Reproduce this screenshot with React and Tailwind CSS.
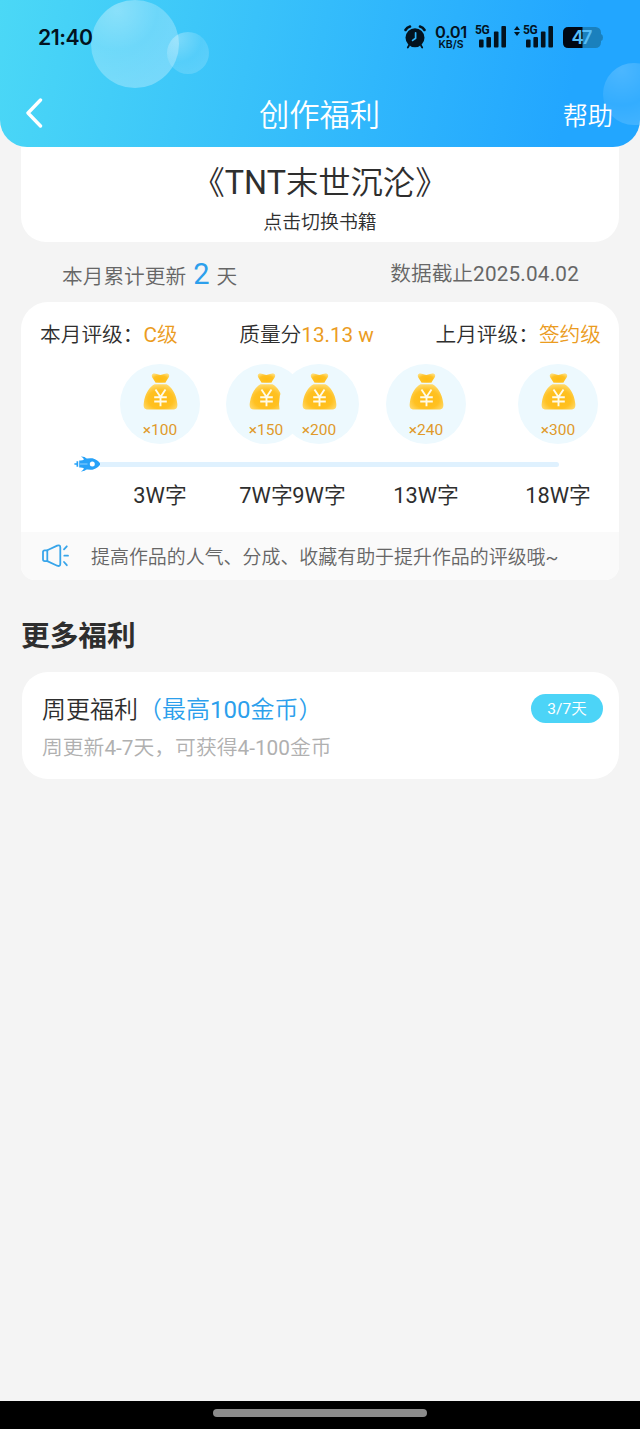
const milestones = [
  { words: '3W', coins: 100, offset: 'ml-[99px]' },
  { words: '7W', coins: 150, offset: 'ml-[26px]' },
  { words: '9W', coins: 200, offset: '-ml-[27px]' },
  { words: '13W', coins: 240, offset: 'ml-[27px]' },
  { words: '18W', coins: 300, offset: 'ml-[52px]' },
];

function AlarmIcon() {
  return (
    <svg className="h-[24px] w-[22px]" viewBox="0 0 22 24" fill="none">
      <path d="M1.5 5Q3 2.3 6 1.5" stroke="#03131f" strokeWidth="2.6" strokeLinecap="round" />
      <path d="M20.5 5Q19 2.3 16 1.5" stroke="#03131f" strokeWidth="2.6" strokeLinecap="round" />
      <path d="M5 20.5L3.8 22.5M17 20.5L18.2 22.5" stroke="#03131f" strokeWidth="1.8" strokeLinecap="round" />
      <circle cx="11" cy="12.7" r="9.5" fill="#03131f" />
      <path d="M11.6 7.8V13.2L8.6 15.4" stroke="#30b5fc" strokeWidth="1.7" strokeLinecap="round" strokeLinejoin="round" />
    </svg>
  );
}

function SignalIcon() {
  return (
    <svg className="h-[22px] w-[27px]" viewBox="0 0 27 22" fill="#03131f">
      <rect x="0" y="13.5" width="4.6" height="8" rx="1" />
      <rect x="7.4" y="11" width="4.6" height="10.5" rx="1" />
      <rect x="14.9" y="5.5" width="4.6" height="16" rx="1" />
      <rect x="22.4" y="0" width="4.6" height="21.5" rx="1" />
    </svg>
  );
}

function BatteryIcon() {
  return (
    <svg className="h-[21px] w-[40px]" viewBox="0 0 40 21">
      <rect x="0" y="0" width="38" height="21" rx="5.5" fill="#1a80bd" />
      <path d="M38 7Q40 7.5 40 10.5Q40 13.5 38 14Z" fill="#1a80bd" />
      <path d="M5.5 0H19.5V21H5.5Q0 21 0 15.5V5.5Q0 0 5.5 0Z" fill="#000814" />
      <text x="8.5" y="17.3" fontSize="18.5" fontWeight="600" fill="#55bdf8" fontFamily="Inter, sans-serif" textLength="21">47</text>
    </svg>
  );
}

function MoneyBag() {
  return (
    <svg className="h-[37px] w-[35px]" viewBox="0 0 35 37">
      <defs>
        <radialGradient id="bag" cx="50%" cy="60%" r="62%">
          <stop offset="0" stopColor="#ffbb12" />
          <stop offset="0.6" stopColor="#ffc122" />
          <stop offset="1" stopColor="#ffdb70" />
        </radialGradient>
      </defs>
      <path d="M12.5 9.8C11 6.5 8.5 4.5 8.8 2.3C9.2 .2 12 .1 13.8 1.1C15.8 2.2 18.8 2.2 20.9 1.1C23 0 25.9 .4 26.2 2.4C26.4 4.6 23.5 6.5 22.5 9.8Z" fill="url(#bag)" />
      <path d="M11.5 11.3H23.5C28 13.5 33 20 34.2 30C34.9 34.5 33.5 36.5 30 36.5H5C1.5 36.5 .1 34.5 .8 30C2 20 7 13.5 11.5 11.3Z" fill="url(#bag)" />
      <path d="M12.5 16.5L17.5 24L22.5 16.5M17.5 24V33.2M11.2 24.3H23.8M11.2 28.5H23.8" stroke="#fffbe8" strokeWidth="1.9" fill="none" />
    </svg>
  );
}

function Rocket() {
  return (
    <svg className="h-[16px] w-[27px] shrink-0" viewBox="0 0 27 16">
      <path d="M5.2 4.4Q8 4.8 10.5 3.3Q14 1.8 18.5 2.3Q24 3.8 26.5 8Q24 12.2 18.5 13.7Q14 14.2 10.5 12.7Q8 11.2 5.2 11.6Z" fill="#27a2f8" />
      <path d="M7 .6Q10.5 .4 13.2 3L10.5 4.6Q9.3 1.8 7 .6ZM7 15.4Q10.5 15.6 13.2 13L10.5 11.4Q9.3 14.2 7 15.4Z" fill="#27a2f8" />
      <path d="M4.2 5.2H2.5V7.2H.4V8.8H2.5V10.8H4.2Z" fill="#27a2f8" />
      <path d="M6 8H13.5" stroke="#8dd0ff" strokeWidth="1" />
      <circle cx="18.3" cy="8" r="2.5" fill="#fff" />
    </svg>
  );
}

function Speaker() {
  return (
    <svg className="h-[24px] w-[27px]" viewBox="0 0 27 24" fill="none" stroke="#38a5ea" strokeWidth="1.8" strokeLinecap="round" strokeLinejoin="round">
      <path d="M5.3 6.3H2.8Q1 6.3 1 8.1V15.3Q1 17.1 2.8 17.1H5.3Z" />
      <path d="M5.3 6.3L15.2 1.6Q18.3 .5 18.3 3.5V19.8Q18.3 22.8 15.2 21.7L5.3 17.1" />
      <path d="M22 5.4L24.8 2.3M22.3 11.7H26M22 18L24.8 21.2" />
    </svg>
  );
}

// Latin letters and digits sit one weight above the Chinese text
function Latin({ children }) {
  return <span className="font-normal">{children}</span>;
}

function StatusBar() {
  return (
    <div className="relative flex h-[74px] items-center pr-[37px] pl-[38px] text-[#03131f]">
      <span className="w-[56px] font-['Inter'] text-[21.2px] leading-[24px] font-semibold tracking-[-0.5px]">21:40</span>
      <div className="ml-auto flex items-center">
        <AlarmIcon />
        <div className="ml-[9px] flex w-[32px] flex-col items-center font-['Inter'] font-semibold">
          <span className="text-[16.5px] leading-[13px] tracking-[-0.3px]">0.01</span>
          <span className="mt-[1px] text-[10.5px] leading-[9px]">KB/S</span>
        </div>
        <div className="ml-[8px] flex h-[22px] items-start">
          <span className="-mr-[11px] w-[15px] font-['Roboto'] text-[12px] leading-[9px] font-bold tracking-[-0.3px]">5G</span>
          <SignalIcon />
        </div>
        <div className="ml-[8px] flex h-[22px] items-start">
          <svg className="mr-[3px] h-[10px] w-[6px]" viewBox="0 0 6 10" fill="#03131f">
            <path d="M3 0L6 4H0ZM3 10L0 6H6Z" />
          </svg>
          <span className="-mr-[12px] w-[15px] font-['Roboto'] text-[12px] leading-[9px] font-bold tracking-[-0.3px]">5G</span>
          <SignalIcon />
        </div>
        <div className="ml-[10px]">
          <BatteryIcon />
        </div>
      </div>
    </div>
  );
}

function Header() {
  return (
    <header className="relative z-10 h-[147px] overflow-hidden rounded-b-[27px] bg-[linear-gradient(102deg,#4bd8f6_0%,#22a6ff_88%)]">
      <div className="absolute top-0 left-[91px] size-[88px] rounded-full bg-[radial-gradient(circle_at_30%_12%,#ffffff60,#ffffff3c_40%,#ffffff50_100%)]" />
      <div className="absolute top-[32px] left-[167px] size-[42px] rounded-full bg-[radial-gradient(circle_at_25%_15%,#ffffff50,#ffffff20_50%,#ffffff30_100%)]" />
      <div className="absolute top-[63px] left-[603px] size-[62px] rounded-full bg-[radial-gradient(circle_at_30%_12%,#ffffff30,#ffffff14_50%,#ffffff30_100%)]" />
      <StatusBar />
      <div className="relative grid h-[78px] grid-cols-3 items-center pr-[27px] pl-[26px] text-white">
        <svg className="h-[30px] w-[17px]" viewBox="0 0 17 30" fill="none">
          <path d="M14.5 2L2 15L14.5 28" stroke="#fff" strokeWidth="3.4" strokeLinecap="round" strokeLinejoin="round" />
        </svg>
        <h1 className="mt-[5px] text-center text-[30.3px] leading-[40px]">创作福利</h1>
        <span className="mt-[7px] text-right text-[25.2px] leading-[36px]">帮助</span>
      </div>
    </header>
  );
}

function LevelCard() {
  return (
    <section className="mx-[21px] flex h-[278px] flex-col overflow-hidden rounded-t-[27px] rounded-b-[14px] bg-white">
      <div className="mt-[17px] flex h-[32px] items-center justify-between pr-[18px] pl-[19px] text-[20.7px] leading-[32px]">
        <p>本月评级：<span className="text-[#eb9c1f]"><Latin>C</Latin>级</span></p>
        <p>质量分<span className="text-[#eb9c1f]"><Latin>13.13 w</Latin></span></p>
        <p>上月评级：<span className="text-[#eb9c1f]">签约级</span></p>
      </div>
      <div className="mt-[13px] flex">
        {milestones.map((m) => (
          <div key={m.words} className={`${m.offset} flex size-[80px] shrink-0 flex-col items-center rounded-full bg-[#edf9fe] pt-[9px]`}>
            <MoneyBag />
            <span className="mt-[10px] text-[15.5px] leading-[20px] font-normal text-[#e09a2a]">×{m.coins}</span>
          </div>
        ))}
      </div>
      <div className="mt-[12px] flex h-[16px] items-center pl-[53px]">
        <Rocket />
        <div className="-ml-[1px] h-[5px] w-[459px] rounded-r-full bg-[#dff1fe]" />
      </div>
      <div className="mt-[9px] flex">
        {milestones.map((m) => (
          <span key={m.words} className={`${m.offset} w-[80px] shrink-0 text-center text-[21.8px] leading-[30px]`}>
            <Latin>{m.words}</Latin>字
          </span>
        ))}
      </div>
      <div className="mt-auto flex h-[48px] items-center bg-[#fafafa] pl-[21px] text-[18.95px] text-[#666]">
        <Speaker />
        <p className="mt-[3px] ml-[22px] leading-[28px] whitespace-nowrap">提高作品的人气、分成、收藏有助于提升作品的评级哦<Latin>~</Latin></p>
      </div>
    </section>
  );
}

export default function App() {
  return (
    <div className="flex h-[1429px] w-[640px] flex-col overflow-hidden bg-[#f4f4f4] font-[Roboto,'Noto_Sans_CJK_SC',sans-serif] font-[350] text-[#2e2e2e]" lang="zh-CN">
      <Header />
      <section className="mx-[21px] -mt-[20px] flex h-[115px] flex-col items-center rounded-b-[25px] bg-white pt-[34px]">
        <h2 className="text-[32.3px] leading-[44px]">《<Latin>TNT</Latin>末世沉沦》</h2>
        <p className="mt-[4px] text-[18.9px] leading-[28px]">点击切换书籍</p>
      </section>
      <div className="flex h-[60px] items-center justify-between pr-[61px] pl-[62px] text-[20.7px] text-[#666]">
        <p className="mt-[7px] leading-[40px]">
          本月累计更新 <span className="mx-[2px] text-[29px] font-normal text-[#2c9fec]">2</span> 天
        </p>
        <p className="mt-[3px] leading-[30px]">数据截止<span className="font-normal tracking-[0.2px]">2025.04.02</span></p>
      </div>
      <LevelCard />
      <h2 className="mt-[36px] ml-[21px] text-[28.7px] leading-[40px] font-bold">更多福利</h2>
      <section className="mt-[16px] mr-[21px] ml-[22px] flex h-[107px] items-start justify-between rounded-[26px] bg-white pr-[16px] pl-[20px]">
        <div className="pt-[20px]">
          <h3 className="text-[24px] leading-[36px]">
            周更福利<span className="text-[#2c9fec]">（最高<Latin>100</Latin>金币）</span>
          </h3>
          <p className="mt-[6px] text-[20.8px] leading-[28px] text-[#b0b0b0]">
            周更新<Latin>4-7</Latin>天，可获得<Latin>4-100</Latin>金币
          </p>
        </div>
        <span className="mt-[22px] flex h-[29px] w-[72px] items-center justify-center rounded-full bg-[#4cd4f7] pt-[2px] text-[15.5px] text-white">
          <Latin>3/7</Latin>天
        </span>
      </section>
      <footer className="mt-auto flex h-[28px] justify-center bg-black pt-[8px]">
        <div className="h-[8px] w-[214px] rounded-full bg-[#8c8c8c]" />
      </footer>
    </div>
  );
}
